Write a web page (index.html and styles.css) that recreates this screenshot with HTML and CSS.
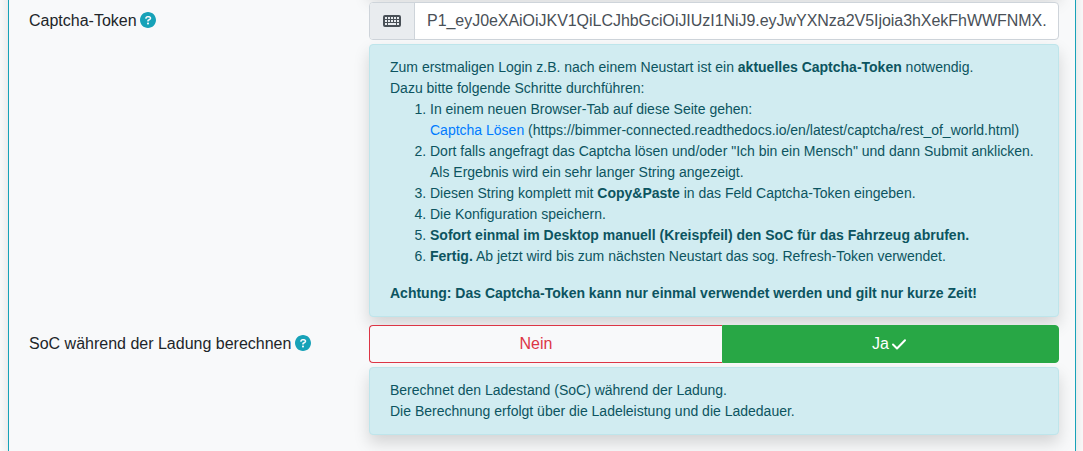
FILE: index.html
```html
<!DOCTYPE html>
<html lang="de">
<head>
<meta charset="utf-8">
<title>Fahrzeug-Konfiguration</title>
<link rel="stylesheet" href="styles.css">
</head>
<body>
<svg width="0" height="0" class="defs">
  <symbol id="help" viewBox="0 0 512 512"><path d="M256 0C114.600 0 0 114.600 0 256s114.600 256 256 256s256-114.600 256-256S397.400 0 256 0zM256 400c-18 0-32-14-32-32s13.100-32 32-32c17.100 0 32 14 32 32S273.100 400 256 400zM325.100 258L280 286V288c0 13-11 24-24 24S232 301 232 288V272c0-8 4-16 12-21l57-34C308 213 312 206 312 198C312 186 301.100 176 289.100 176h-51.100C225.100 176 216 186 216 198c0 13-11 24-24 24s-24-11-24-24C168 159 199 128 237.100 128h51.100C329 128 360 159 360 198C360 222 347 245 325.100 258z"/></symbol>
</svg>
<main class="card">
  <div class="alert previous"></div>
  <div class="row">
    <label class="label">Captcha-Token <svg class="help"><use href="#help"/></svg></label>
    <div class="field">
      <div class="input-group">
        <span class="addon">
          <svg class="keyboard" viewBox="0 0 18 12"><path fill-rule="evenodd" d="M2 0h14a2 2 0 0 1 2 2v8a2 2 0 0 1-2 2H2a2 2 0 0 1-2-2V2a2 2 0 0 1 2-2zM2 2v2h2V2zM5 2v2h2V2zM8 2v2h2V2zM11 2v2h2V2zM14 2v2h2V2zM2 5v2h2V5zM5 5v2h2V5zM8 5v2h2V5zM11 5v2h2V5zM14 5v2h2V5zM2 8v2h2V8zM5 8v2h8V8zM14 8v2h2V8z"/></svg>
        </span>
        <div class="control"><span class="value">P1_eyJ0eXAiOiJKV1QiLCJhbGciOiJIUzI1NiJ9.eyJwYXNza2V5Ijoia3hXekFhWWFNMX.</span></div>
      </div>
      <div class="alert">
        Zum erstmaligen Login z.B. nach einem Neustart ist ein <b>aktuelles Captcha-Token</b> notwendig.<br>
        Dazu bitte folgende Schritte durchführen:
        <ol>
          <li>In einem neuen Browser-Tab auf diese Seite gehen:<br><a class="link">Captcha Lösen</a> (https://bimmer-connected.readthedocs.io/en/latest/captcha/rest_of_world.html)</li>
          <li>Dort falls angefragt das Captcha lösen und/oder "Ich bin ein Mensch" und dann Submit anklicken.<br>Als Ergebnis wird ein sehr langer String angezeigt.</li>
          <li>Diesen String komplett mit <b>Copy&amp;Paste</b> in das Feld Captcha-Token eingeben.</li>
          <li>Die Konfiguration speichern.</li>
          <li><b>Sofort einmal im Desktop manuell (Kreispfeil) den SoC für das Fahrzeug abrufen.</b></li>
          <li><b>Fertig.</b> Ab jetzt wird bis zum nächsten Neustart das sog. Refresh-Token verwendet.</li>
        </ol>
        <b>Achtung: Das Captcha-Token kann nur einmal verwendet werden und gilt nur kurze Zeit!</b>
      </div>
    </div>
  </div>
  <div class="row">
    <label class="label">SoC während der Ladung berechnen <svg class="help"><use href="#help"/></svg></label>
    <div class="field">
      <div class="buttons">
        <div class="btn btn-no">Nein</div>
        <div class="btn btn-yes">Ja<svg class="check" viewBox="0 0 16 16"><path d="M2 8.500L6 12.500L14 4.300"/></svg></div>
      </div>
      <div class="alert">
        Berechnet den Ladestand (SoC) während der Ladung.<br>
        Die Berechnung erfolgt über die Ladeleistung und die Ladedauer.
      </div>
    </div>
  </div>
</main>
</body>
</html>
```
FILE: styles.css
```css
* { box-sizing: border-box; }
html { overflow: hidden; }
body {
  display: flex;
  flex-direction: column;
  justify-content: flex-end;
  margin: 0;
  padding: 0 7px 0 8px;
  height: 451px;
  overflow: hidden;
  background: #fff;
  color: #212529;
  font: 16px/24px "Liberation Sans", Arial, sans-serif;
}
.defs { display: none; }
.card {
  flex: none;
  height: 477px;
  padding: 0 16px 0 20px;
  border: solid #17a2b8;
  border-width: 0 1px;
  background: #f8f9fa;
  box-shadow: 0 8px 16px rgba(0, 0, 0, .15);
}
.row { display: flex; margin-bottom: 8px; }
.label { width: 340px; padding-top: 7px; white-space: nowrap; }
.field { flex: 1; min-width: 0; }
.help {
  width: 16px;
  height: 16px;
  margin-left: -1px;
  fill: #17a2b8;
  vertical-align: -2px;
}
.input-group {
  display: flex;
  height: 38px;
  border: 1px solid #ced4da;
  border-radius: 4px;
  background: #fff;
  color: #495057;
}
.addon {
  display: flex;
  align-items: center;
  justify-content: center;
  width: 45px;
  border-right: 1px solid #ced4da;
  border-radius: 3px 0 0 3px;
  background: #e9ecef;
}
.keyboard { width: 18px; height: 12px; fill: #495057; }
.control { flex: 1; min-width: 0; padding: 6px 8px 6px 12px; }
.value { display: block; white-space: nowrap; letter-spacing: -.04px; }
.alert {
  margin-top: 4px;
  padding: 12px 20px;
  border: 1px solid #bee5eb;
  border-radius: 4px;
  background: #d1ecf1;
  color: #0c5460;
  font-size: 14px;
  line-height: 21px;
  box-shadow: 0 8px 16px rgba(0, 0, 0, .15);
}
.alert.previous {
  height: 20px;
  margin: 0 0 8px 340px;
  padding: 0;
}
.alert ol { margin: 0 0 16px; padding-left: 40px; }
.link { color: #007bff; }
.buttons { position: relative; display: flex; height: 38px; }
.btn {
  display: flex;
  align-items: center;
  justify-content: center;
  border: 1px solid #dc3545;
}
.btn-no {
  width: 353px;
  padding-right: 20px;
  border-right: 0;
  border-radius: 4px 0 0 4px;
  background: #f8f9fa;
  color: #dc3545;
}
.btn-yes {
  flex: 1;
  padding-right: 2px;
  border-color: #28a745;
  border-radius: 0 4px 4px 0;
  background: #28a745;
  color: #fff;
}
.check {
  width: 16px;
  height: 16px;
  margin-left: 2px;
  fill: none;
  stroke: #fff;
  stroke-width: 2;
  stroke-linecap: round;
  stroke-linejoin: round;
}
```
